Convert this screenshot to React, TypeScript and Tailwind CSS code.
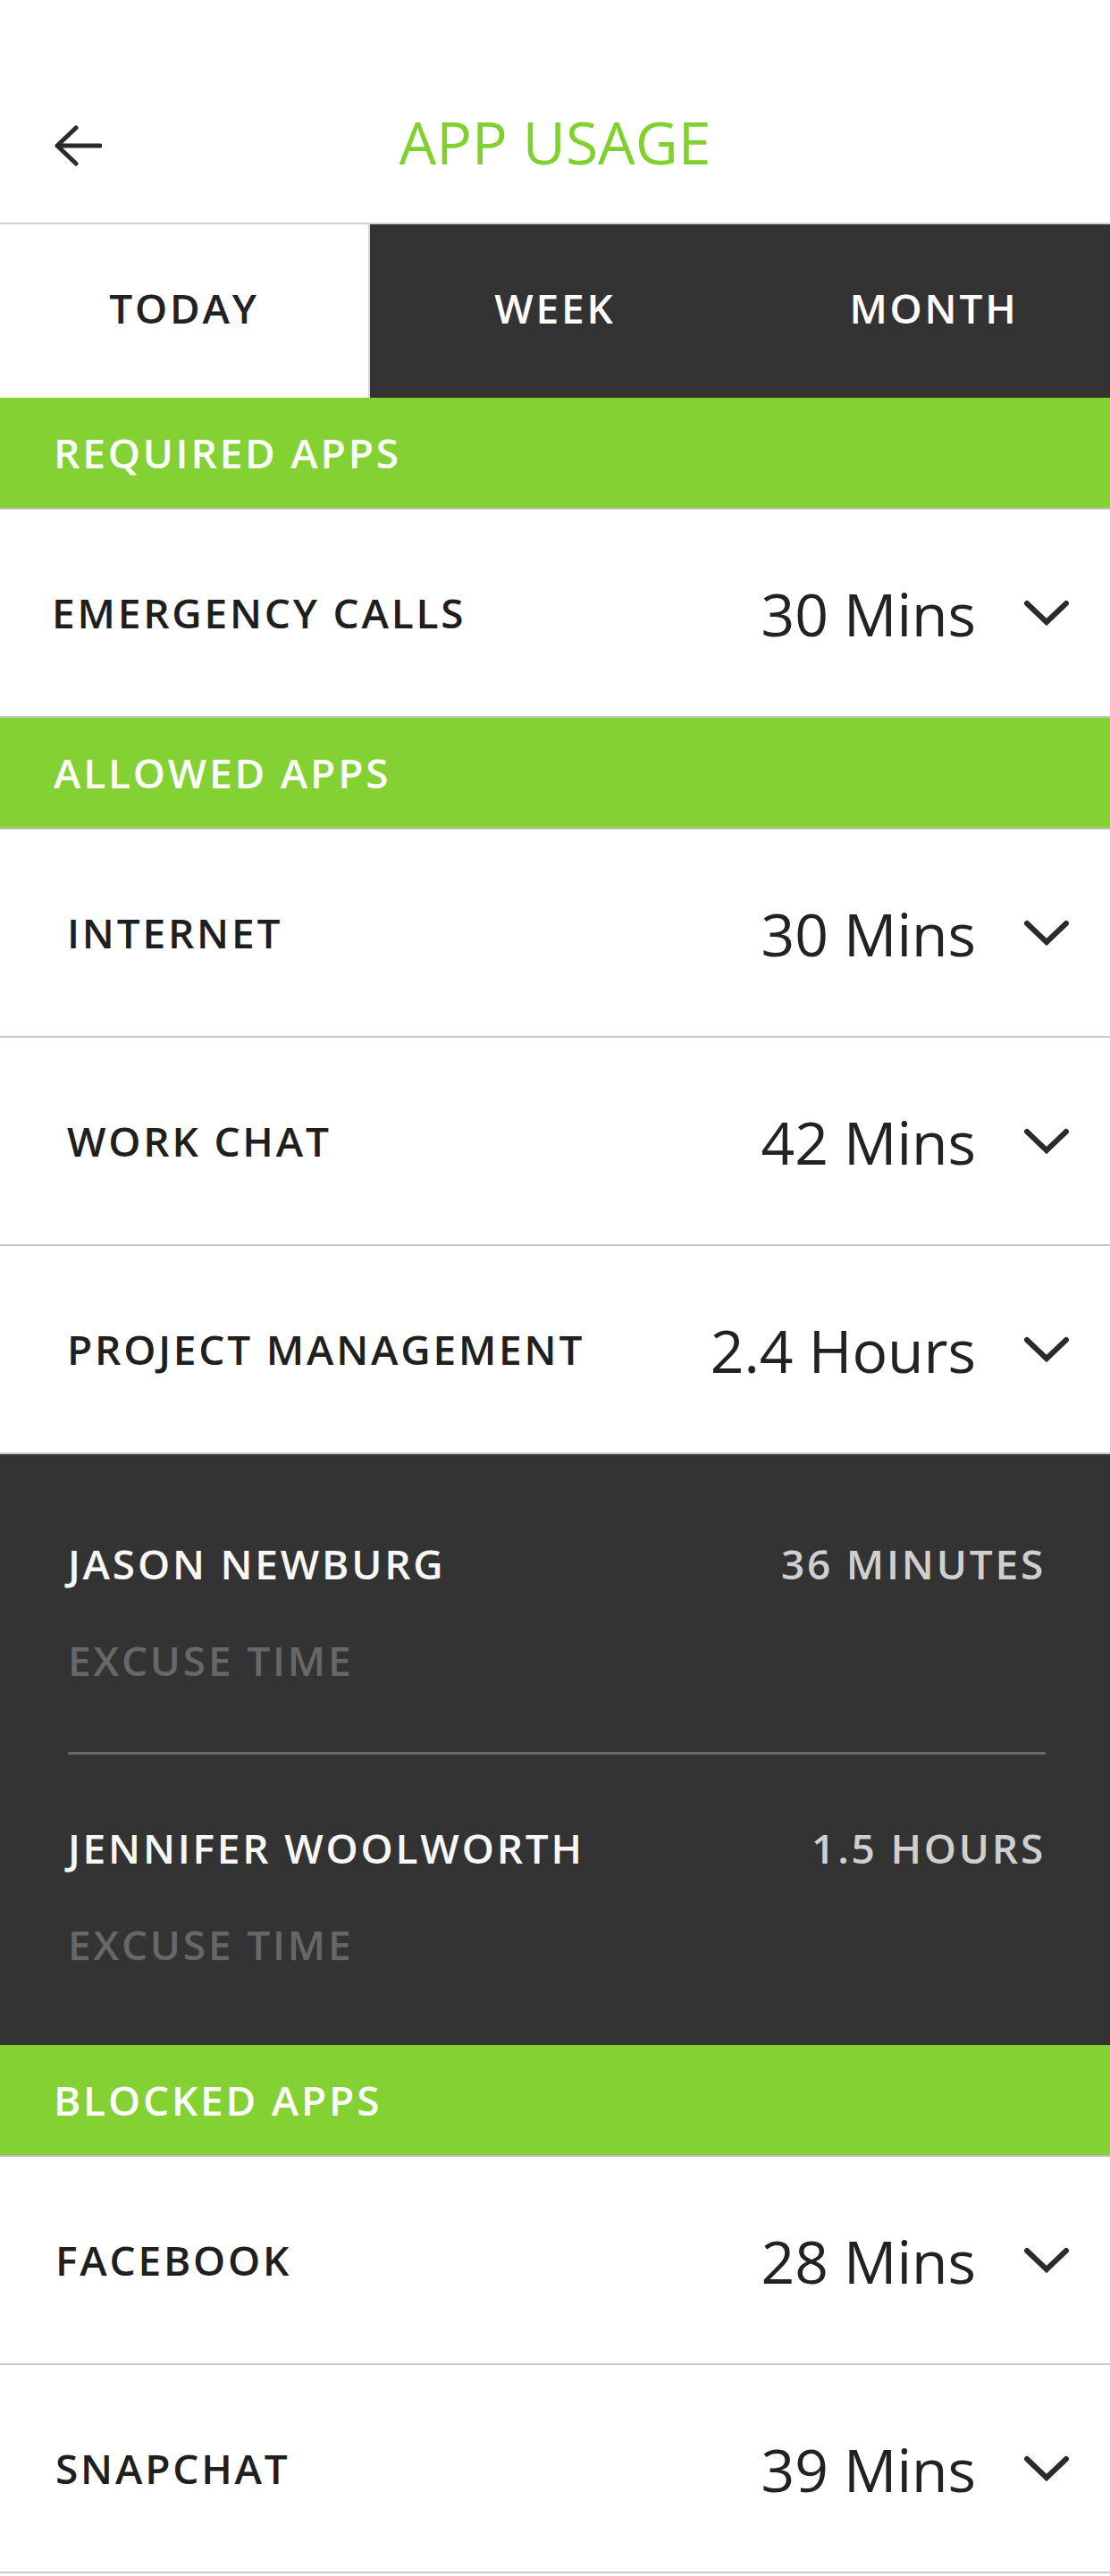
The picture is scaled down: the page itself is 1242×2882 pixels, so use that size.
import React from 'react';

type Row = { name: string; value: string; pad: string };

const ALLOWED: Row[] = [
  { name: 'INTERNET', value: '30 Mins', pad: 'pl-[75px]' },
  { name: 'WORK CHAT', value: '42 Mins', pad: 'pl-[75px]' },
  { name: 'PROJECT MANAGEMENT', value: '2.4 Hours', pad: 'pl-[75px]' },
];

const BLOCKED: Row[] = [
  { name: 'FACEBOOK', value: '28 Mins', pad: 'pl-[62px]' },
  { name: 'SNAPCHAT', value: '39 Mins', pad: 'pl-[62px]' },
];

const EXCUSES = [
  { name: 'JASON NEWBURG', time: '36 MINUTES' },
  { name: 'JENNIFER WOOLWORTH', time: '1.5 HOURS' },
];

function Chevron() {
  return (
    <svg width="52" height="30" viewBox="0 0 52 30" fill="none" className="ml-[53px] shrink-0">
      <polyline
        points="4,4 26,25 48,4"
        stroke="#2b2b2b"
        strokeWidth="6"
        strokeLinecap="round"
        strokeLinejoin="miter"
      />
    </svg>
  );
}

function SectionHeader({ title }: { title: string }) {
  return (
    <div className="flex h-[125px] items-center border-b-2 border-[#bdbdbd] bg-[#84d134] pl-[60px] text-[46px] font-semibold tracking-[2.8px] text-white">
      {title}
    </div>
  );
}

function UsageRow({ name, value, pad }: Row) {
  return (
    <div className={`flex h-[233px] items-center border-b-2 border-[#c9c9c9] bg-white pr-[45px] ${pad}`}>
      <span className="text-[46px] font-semibold tracking-[2.8px] text-[#1f1f1f]">{name}</span>
      <span className="ml-auto text-[66px] leading-[80px] text-[#222]">{value}</span>
      <Chevron />
    </div>
  );
}

export default function App() {
  return (
    <div className="min-h-[2882px] w-[1242px] bg-white font-['Open_Sans','Liberation_Sans',sans-serif]">
      {/* header */}
      <header className="grid h-[249px] grid-cols-[1fr_auto_1fr] items-center pt-[66px]">
        <button className="mt-[10px] ml-[60px] w-fit">
          <svg width="54" height="46" viewBox="0 0 54 46" fill="none">
            <path d="M52 23H4M25 3L4 23L25 43" stroke="#2b2b2b" strokeWidth="5" strokeLinecap="round" strokeLinejoin="round" />
          </svg>
        </button>
        <h1 className="text-[66px] leading-[80px] font-normal text-[#7fd12e]">APP USAGE</h1>
        <div />
      </header>

      {/* tabs */}
      <nav className="grid h-[196px] grid-cols-3 border-t-2 border-[#d4d4d4] text-[46px] font-semibold tracking-[2.8px]">
        <div className="flex items-center justify-center border-r-2 border-[#d9d9d9] bg-white pb-[8px] text-[#222]">TODAY</div>
        <div className="flex items-center justify-center bg-[#333333] pb-[8px] text-white">WEEK</div>
        <div className="flex items-center justify-center bg-[#333333] pb-[8px] pl-[20px] text-white">MONTH</div>
      </nav>

      <SectionHeader title="REQUIRED APPS" />
      <UsageRow name="EMERGENCY CALLS" value="30 Mins" pad="pl-[58px]" />

      <SectionHeader title="ALLOWED APPS" />
      {ALLOWED.map((r) => (
        <UsageRow key={r.name} {...r} />
      ))}

      {/* expanded detail */}
      <div className="flex flex-col bg-[#333333] pt-[92px] pr-[72px] pb-[83px] pl-[76px] text-[46px] font-semibold tracking-[2.8px]">
        {EXCUSES.map((e, i) => (
          <React.Fragment key={e.name}>
            {i > 0 && <div className="mt-[73px] mb-[74px] h-[3px] bg-[#686868]" />}
            <div className="flex h-[60px] items-center justify-between">
              <span className="text-[#f7f7f7]">{e.name}</span>
              <span className="text-[#cfcfcf]">{e.time}</span>
            </div>
            <div className="mt-[48px] flex h-[60px] items-center text-[#676767]">EXCUSE TIME</div>
          </React.Fragment>
        ))}
      </div>

      <SectionHeader title="BLOCKED APPS" />
      {BLOCKED.map((r) => (
        <UsageRow key={r.name} {...r} />
      ))}
    </div>
  );
}
